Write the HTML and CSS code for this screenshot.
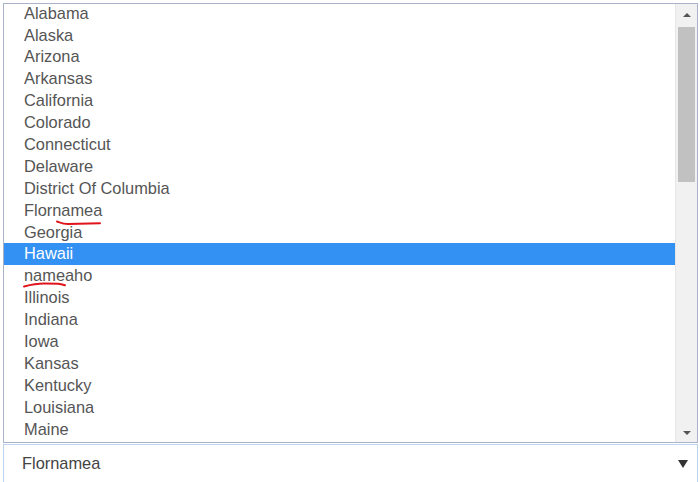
FILE: index.html
```html
<!DOCTYPE html>
<html>
<head>
<meta charset="utf-8">
<link rel="stylesheet" href="styles.css">
</head>
<body>
<div class="listbox">
  <ul class="options">
    <li>Alabama</li>
    <li>Alaska</li>
    <li>Arizona</li>
    <li>Arkansas</li>
    <li>California</li>
    <li>Colorado</li>
    <li>Connecticut</li>
    <li>Delaware</li>
    <li>District Of Columbia</li>
    <li>Flornamea</li>
    <li>Georgia</li>
    <li class="selected">Hawaii</li>
    <li>nameaho</li>
    <li>Illinois</li>
    <li>Indiana</li>
    <li>Iowa</li>
    <li>Kansas</li>
    <li>Kentucky</li>
    <li>Louisiana</li>
    <li>Maine</li>
  </ul>
  <div class="scrollbar">
    <div class="arrow up"></div>
    <div class="track"><div class="thumb"></div></div>
    <div class="arrow down"></div>
  </div>
  <svg class="marks" width="700" height="482" viewBox="0 0 700 482">
    <path d="M57 221.5 C60 222.5 63 224 68 224 L100 223.2" />
    <path d="M24 286.5 C30 285 36 283.6 44 283.6 L58 283.8 C61 284 63 284.6 65 285.2" />
  </svg>
</div>
<div class="select">
  <span class="value">Flornamea</span>
  <span class="caret"></span>
</div>
</body>
</html>
```

FILE: styles.css
```css
html, body {
  margin: 0;
  padding: 0;
  background: #ffffff;
  width: 700px;
  height: 482px;
  overflow: hidden;
  font-family: "Liberation Sans", Arial, sans-serif;
}

.listbox {
  box-sizing: border-box;
  margin: 3px 2px 0 3px;
  height: 440px;
  border: 1px solid #a9b3c9;
  display: flex;
  overflow: hidden;
}

.options {
  list-style: none;
  margin: -1.4px 0 0 0;
  padding: 0;
  flex: 1;
}

.options li {
  height: 21.9px;
  line-height: 21.9px;
  font-size: 16.4px;
  color: #555555;
  padding-left: 20px;
  white-space: nowrap;
}

.options li.selected {
  background: #3391f3;
  color: #ffffff;
}

.scrollbar {
  width: 21px;
  background: #f1f1f1;
  border-left: 1px solid #e6e6e6;
  display: flex;
  flex-direction: column;
  align-items: center;
}

.arrow {
  width: 0;
  height: 0;
  border-left: 4px solid transparent;
  border-right: 4px solid transparent;
}

.arrow.up {
  margin-top: 9px;
  border-bottom: 4px solid #555555;
}

.arrow.down {
  margin-bottom: 7px;
  border-top: 4px solid #555555;
}

.track {
  flex: 1;
  width: 100%;
  display: flex;
  justify-content: center;
  padding-top: 10px;
}

.thumb {
  width: 17px;
  height: 155px;
  background: #c1c1c1;
}

.marks {
  position: absolute;
  left: 0;
  top: 0;
  pointer-events: none;
}

.marks path {
  fill: none;
  stroke: #e0141b;
  stroke-width: 2;
  stroke-linecap: round;
}

.select {
  box-sizing: border-box;
  margin: 1px 2px 0 3px;
  height: 42px;
  border: 1px solid #bcd4ee;
  display: flex;
  align-items: center;
  justify-content: space-between;
  padding: 0 9px 3px 18px;
}

.value {
  font-size: 16.4px;
  color: #444444;
}

.caret {
  width: 0;
  height: 0;
  border-left: 5px solid transparent;
  border-right: 5px solid transparent;
  border-top: 8px solid #333333;
}
```
